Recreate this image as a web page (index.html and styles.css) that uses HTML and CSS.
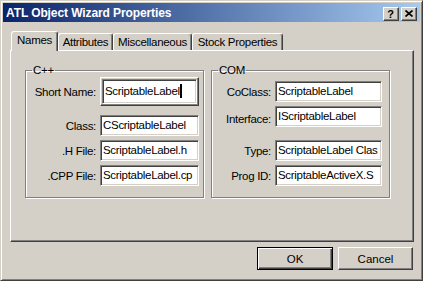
FILE: index.html
```html
<!DOCTYPE html>
<html lang="en">
<head>
    <meta charset="UTF-8">
    <title>ATL Object Wizard Properties</title>
    <link rel="stylesheet" href="styles.css">
</head>
<body>
    <div class="window">
        <div class="titlebar">
            <span class="title">ATL Object Wizard Properties</span>
            <div class="caption-buttons">
                <span class="cap-btn help">?</span>
                <span class="cap-btn close">
                    <svg width="8" height="7" viewBox="0 0 8 7"><path d="M0.5 0.5L7.5 6.5M7.5 0.5L0.5 6.5" stroke="#000" stroke-width="1.7"/></svg>
                </span>
            </div>
        </div>

        <div class="client">
            <div class="tabs">
                <div class="tab active tab-names">Names</div>
                <div class="tab tab-attr">Attributes</div>
                <div class="tab tab-misc">Miscellaneous</div>
                <div class="tab tab-stock">Stock Properties</div>
            </div>

            <div class="panel">
                <fieldset class="group group-cpp">
                    <legend>C++</legend>
                    <div class="form">
                        <label class="first">Short Name:</label>
                        <div class="edit-frame first">
                            <div class="edit tall">ScriptableLabel<span class="caret"></span></div>
                        </div>
                        <label>Class:</label>
                        <div class="edit">CScriptableLabel</div>
                        <label>.H File:</label>
                        <div class="edit">ScriptableLabel.h</div>
                        <label>.CPP File:</label>
                        <div class="edit">ScriptableLabel.cp</div>
                    </div>
                </fieldset>

                <fieldset class="group group-com">
                    <legend>COM</legend>
                    <div class="form">
                        <label class="top">CoClass:</label>
                        <div class="edit top">ScriptableLabel</div>
                        <label class="low">Interface:</label>
                        <div class="edit">IScriptableLabel</div>
                        <label class="spaced">Type:</label>
                        <div class="edit spaced">ScriptableLabel Clas</div>
                        <label>Prog ID:</label>
                        <div class="edit">ScriptableActiveX.S</div>
                    </div>
                </fieldset>
            </div>

            <div class="actions">
                <button class="btn default">OK</button>
                <button class="btn">Cancel</button>
            </div>
        </div>
    </div>
</body>
</html>
```

FILE: styles.css
```css
body {
    margin: 0;
    font-family: "Liberation Sans", Arial, sans-serif;
    font-size: 11.5px;
    letter-spacing: -0.3px;
    color: #000;
}
.window {
    width: 423px;
    height: 281px;
    box-sizing: border-box;
    border: 1px solid;
    border-color: #d4d0c8 #404040 #404040 #d4d0c8;
    box-shadow: inset 1px 1px #fff, inset -1px -1px #808080;
    padding: 2px;
    background: #d4d0c8;
    display: flex;
    flex-direction: column;
}

/* title bar */
.titlebar {
    height: 19px;
    flex: none;
    display: flex;
    align-items: center;
    justify-content: space-between;
    padding: 0 3px 0 3px;
    background: linear-gradient(to right, #0a246a, #a6caf0);
}
.title {
    font-weight: bold;
    font-size: 12px;
    color: #fff;
    letter-spacing: -0.1px;
}
.caption-buttons {
    display: flex;
    gap: 2px;
    margin-top: 2px;
}
.cap-btn {
    width: 16px;
    height: 14px;
    box-sizing: border-box;
    border: 1px solid;
    border-color: #fff #404040 #404040 #fff;
    box-shadow: inset -1px -1px #808080;
    background: #d4d0c8;
    display: flex;
    align-items: center;
    justify-content: center;
}
.help {
    font-weight: bold;
    font-size: 11px;
    line-height: 10px;
    letter-spacing: 0;
    padding-right: 1px;
}

/* client area */
.client {
    padding: 9px 6px 0 7px;
}
.tabs {
    display: flex;
    align-items: flex-end;
    height: 19px;
    margin-left: 1px;
}
.tab {
    box-sizing: border-box;
    height: 17px;
    border: 1px solid;
    border-bottom: none;
    border-color: #fff #404040 #fff #fff;
    box-shadow: inset -1px 0 #808080;
    border-radius: 3px 3px 0 0;
    text-align: center;
    line-height: 16px;
    white-space: nowrap;
}
.tab.active {
    height: 20px;
    margin-bottom: -1px;
    position: relative;
    z-index: 1;
    background: #d4d0c8;
    line-height: 17px;
}
.tab-names { width: 47px; }
.tab-attr { width: 55px; }
.tab-misc { width: 79px; }
.tab-stock { width: 91px; }

.panel {
    width: 404px;
    height: 192px;
    box-sizing: border-box;
    border: 1px solid;
    border-color: #fff #404040 #404040 #fff;
    box-shadow: inset -1px -1px #808080;
    display: flex;
    gap: 7px;
    padding: 12px 0 0 14px;
}

/* group boxes */
.group {
    margin: 0;
    padding: 0;
    width: 179px;
    height: 135px;
    box-sizing: border-box;
    border: 1px solid #808080;
    box-shadow: inset 1px 1px #fff, 1px 1px #fff;
}
.group legend {
    margin-left: 6px;
    padding: 0 1px;
    line-height: 15px;
}
.form {
    display: grid;
    row-gap: 4px;
    column-gap: 4px;
    align-items: center;
    margin-top: -1px;
}
.group-cpp .form {
    grid-template-columns: 70px 99px;
}
.group-com .form {
    grid-template-columns: 59px 107px;
}
.form label {
    text-align: right;
    white-space: nowrap;
}
.form .first {
    margin-bottom: 5px;
}
.form .top {
    margin-top: 4px;
}
.form .low {
    padding-top: 4px;
}
.form .spaced {
    margin-top: 9px;
}

/* edit fields */
.edit {
    height: 21px;
    box-sizing: border-box;
    border: 1px solid;
    border-color: #808080 #fff #fff #808080;
    box-shadow: inset 1px 1px #404040, inset -1px -1px #d4d0c8;
    background: #fff;
    padding: 0 0 0 2px;
    line-height: 18px;
    white-space: nowrap;
    overflow: hidden;
}
.edit.tall {
    height: 25px;
    line-height: 22px;
}
.edit-frame {
    border: 1px solid;
    border-color: #fff #404040 #404040 #fff;
    box-shadow: inset -1px -1px #808080;
    padding: 1px;
}
.caret {
    display: inline-block;
    width: 2px;
    height: 14px;
    background: #000;
    vertical-align: -3px;
}

/* dialog buttons */
.actions {
    display: flex;
    justify-content: flex-end;
    gap: 5px;
    margin-top: 5px;
    padding-right: 1px;
}
.btn {
    width: 75px;
    height: 23px;
    box-sizing: border-box;
    border: 1px solid;
    border-color: #fff #404040 #404040 #fff;
    box-shadow: inset -1px -1px #808080;
    background: #d4d0c8;
    font: inherit;
    color: #000;
    padding: 0;
}
.btn.default {
    width: 76px;
    border: 1px solid #000;
    box-shadow: inset 1px 1px #fff, inset -1px -1px #404040, inset -2px -2px #808080;
}
```
